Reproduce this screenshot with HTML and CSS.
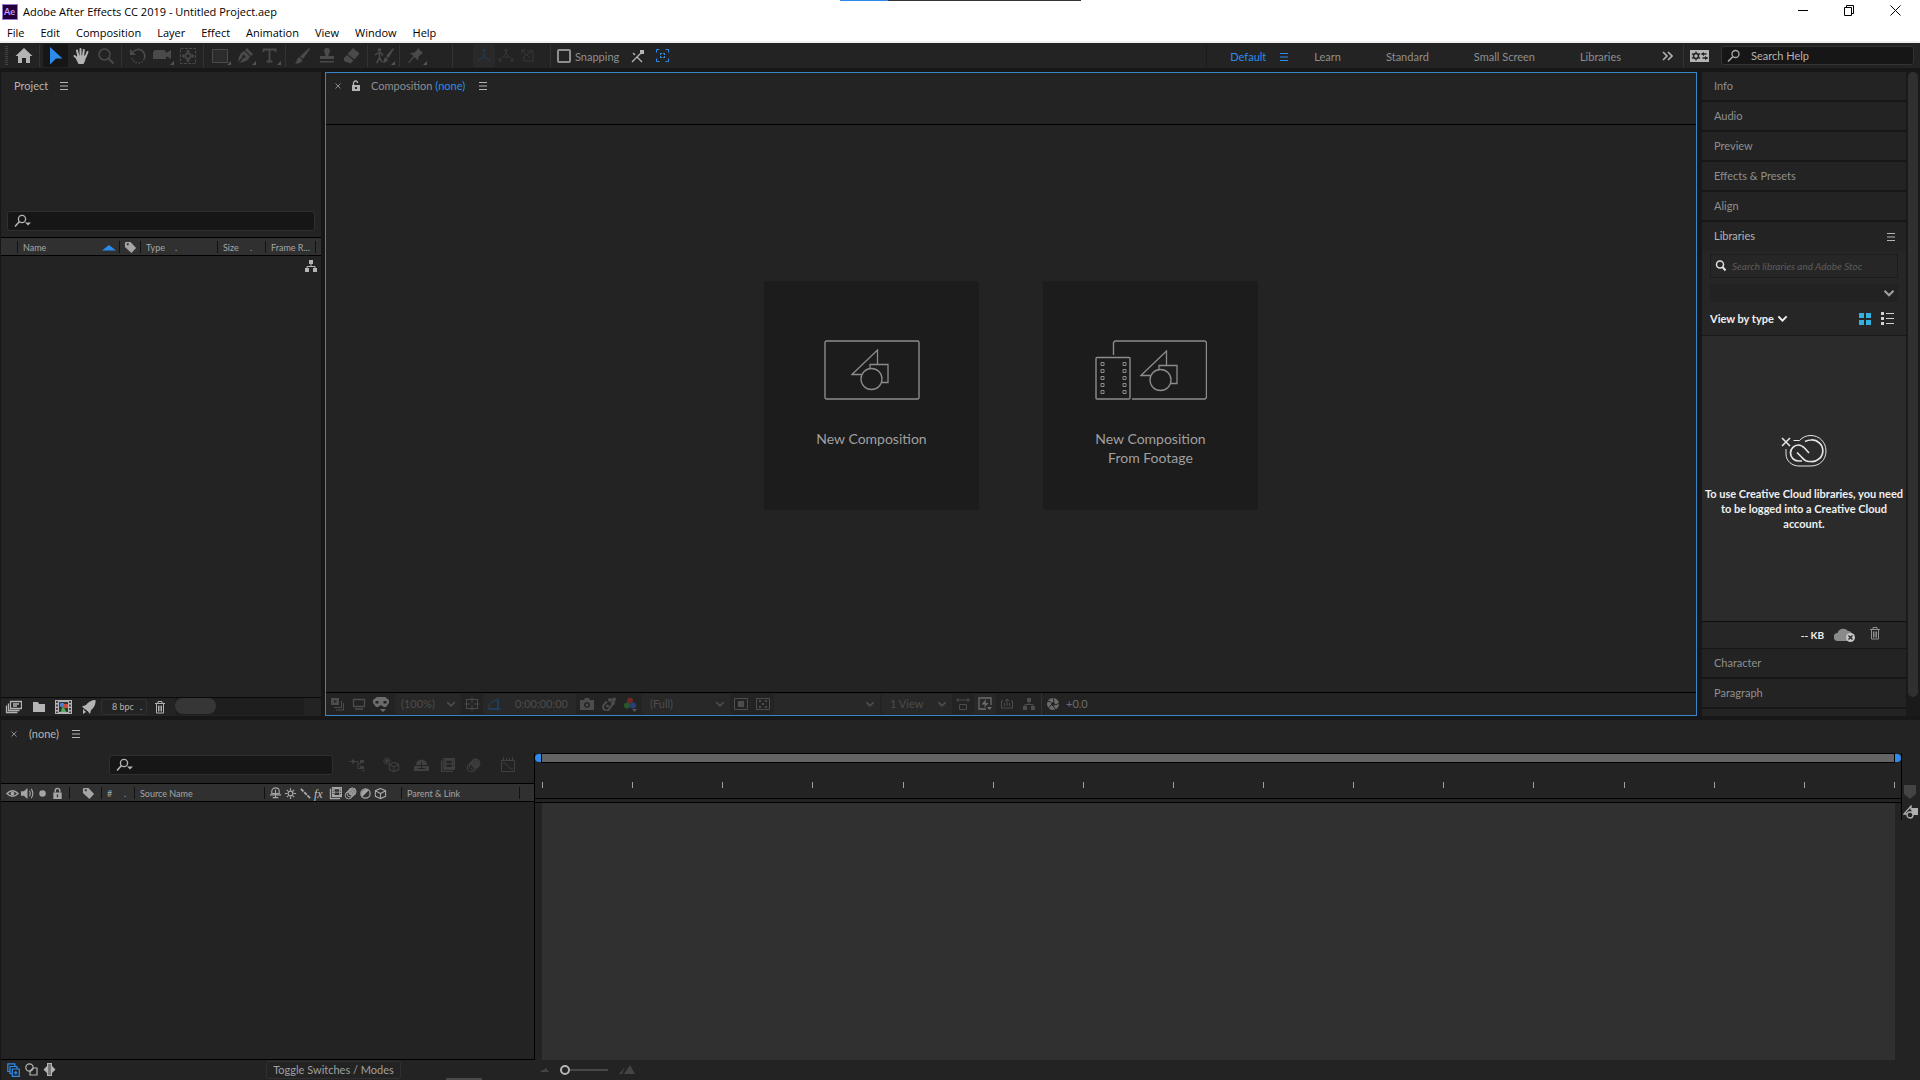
FILE: index.html
```html
<!DOCTYPE html>
<html lang="en">
<head>
  <meta charset="UTF-8">
  <meta name="viewport" content="width=device-width, initial-scale=1.0">
  <title>Adobe After Effects CC 2019 - Untitled Project.aep</title>
  <link rel="stylesheet" href="styles.css">
</head>
<body>
  <!-- shared icons -->
  <svg class="defs" width="0" height="0">
    <symbol id="menu" viewBox="0 0 10 10"><path d="M1 1.5h8M1 5h8M1 8.5h8" stroke="currentColor"/></symbol>
    <symbol id="chevron" viewBox="0 0 8 8"><path d="M1 2.5l3 3 3-3" fill="none" stroke="currentColor" stroke-width="1.4"/></symbol>
    <symbol id="find" viewBox="0 0 18 14"><circle cx="8" cy="5" r="3.6" fill="none" stroke="currentColor" stroke-width="1.3"/><path d="M5.500 7.500L1 12.500" stroke="currentColor" stroke-width="1.600"/><path d="M11 8.500h6l-3 3z" fill="currentColor"/></symbol>
    <symbol id="tag" viewBox="0 0 14 14"><path fill-rule="evenodd" fill="currentColor" d="M1 2l1-1h5l6 6.500-5 5.500L1 6.500zM3 2.500v2h2v-2z"/></symbol>
    <symbol id="tree" viewBox="0 0 14 14"><path fill="currentColor" d="M5 1h4v4H5zM1 9h4v4H1zM9 9h4v4H9z"/><path d="M7 5v2.500M3 9V7.500h8V9" fill="none" stroke="currentColor"/></symbol>
    <symbol id="shapes" viewBox="0 0 38 42"><g fill="none" stroke="currentColor" stroke-width="1.300"><path d="M10.500 25.500H1L26.500 1v14"/><path d="M19 19.500v-4h18v18h-6.500"/><circle cx="20.500" cy="30" r="10.500"/></g></symbol>
    <symbol id="film" viewBox="0 0 14 14"><path fill-rule="evenodd" fill="currentColor" d="M3 0h11v11H3zM6 2.500V5h5V2.500zM6 6v2.500h5V6zM4 1.500v1h1v-1zM4 4v1h1V4zM4 6.500v1h1v-1zM12 1.500v1h1v-1zM12 4v1h1V4zM12 6.500v1h1v-1z"/><path d="M1.500 2v10.500H12" fill="none" stroke="currentColor" stroke-width="1.300"/></symbol>
    <symbol id="blur" viewBox="0 0 14 14"><g stroke="currentColor" fill="none"><circle cx="5" cy="9" r="3.800"/><circle cx="7" cy="7" r="3.800"/></g><circle cx="9" cy="5" r="4" fill="currentColor" opacity=".7"/><circle cx="9" cy="5" r="4" fill="none" stroke="currentColor"/></symbol>
    <symbol id="cube" viewBox="0 0 14 14"><path d="M7 1.500l5.500 2.500v6L7 12.500 1.500 10V4zM1.500 4L7 7l5.500-3M7 7v5.500" fill="none" stroke="currentColor" stroke-width="1.200"/></symbol>
    <symbol id="shy" viewBox="0 0 14 14"><path d="M3 7V4.500a4 3.500 0 0 1 8 0V7zM7 3v9M1 8.500h12M4 11.500h6" fill="none" stroke="currentColor" stroke-width="1.200"/></symbol>
    <symbol id="trash" viewBox="0 0 14 14"><path d="M2 3.500h10M5 3V1.500h4V3M3.500 4v9h7V4M5.500 5.500v6M7 5.500v6M8.500 5.500v6" fill="none" stroke="currentColor"/></symbol>
  </svg>

  <header class="titlebar">
    <div class="title">
      <svg width="16" height="16" viewBox="0 0 16 16" font-family="Lato, sans-serif"><path d="M0 0h16v16H0z" fill="#9a7bd0"/><path d="M1 1h14v14H1z" fill="#22003c"/><text x="2" y="11" font-size="9" font-weight="bold" fill="#c79bff">Ae</text></svg>
      <h1>Adobe After Effects CC 2019 - Untitled Project.aep</h1>
    </div>
    <div class="drag-strip"></div>
    <div class="window-buttons">
      <button aria-label="Minimize"><svg width="11" height="11"><path d="M0 5.500h10" stroke="#000"/></svg></button>
      <button aria-label="Restore"><svg width="11" height="11"><path d="M.5 2.500h7v8h-7zM2.500 2.500v-2h7v8h-2" fill="none" stroke="#000"/></svg></button>
      <button aria-label="Close"><svg width="11" height="11"><path d="M.5.500l10 10M10.500.500l-10 10" stroke="#000"/></svg></button>
    </div>
  </header>

  <nav class="menubar">
    <button>File</button>
    <button>Edit</button>
    <button>Composition</button>
    <button>Layer</button>
    <button>Effect</button>
    <button>Animation</button>
    <button>View</button>
    <button>Window</button>
    <button>Help</button>
  </nav>

  <div class="toolbar">
    <span class="grip"></span>
    <button class="tool bright" aria-label="Home"><svg width="18" height="16" viewBox="0 0 18 16"><path fill="currentColor" d="M9 0l8.500 8H15v7h-4v-5H7v5H3V8H.5z"/></svg></button>
    <span class="sep"></span>
    <button class="tool selected" aria-label="Selection"><svg width="14" height="18" viewBox="0 0 14 18"><path fill="currentColor" d="M1 0l12.500 11.500H7L1 17.500z"/></svg></button>
    <button class="tool bright" aria-label="Hand"><svg width="16" height="16" viewBox="0 0 16 16"><path d="M5.500 9L4 2.500M7.500 8V1M10 8l.8-6M12.500 9l2-5M5 11L1.500 8" stroke="currentColor" stroke-width="2" stroke-linecap="round"/><path fill="currentColor" d="M4.500 7.500h9L12 13l-1.500 3h-5L3 11z"/></svg></button>
    <button class="tool" aria-label="Zoom"><svg width="16" height="16" viewBox="0 0 16 16"><circle cx="6.500" cy="6.500" r="5.500" fill="none" stroke="currentColor" stroke-width="1.500"/><path d="M10.500 10.500l5 5" stroke="currentColor" stroke-width="2"/></svg></button>
    <span class="sep"></span>
    <button class="tool" aria-label="Rotation"><svg width="18" height="16" viewBox="0 0 18 16"><path d="M4 4a6.500 6.500 0 0 1 10.500 8" fill="none" stroke="currentColor" stroke-width="1.600"/><path d="M13.500 13.500A6.500 6.500 0 0 1 3 10" fill="none" stroke="currentColor" stroke-width="1.600" stroke-dasharray="1.500 1.500"/><path fill="currentColor" d="M1 1v6h6z"/></svg></button>
    <button class="tool more" aria-label="Camera"><svg width="19" height="16" viewBox="0 0 19 16"><path fill="currentColor" d="M0 4l2-2h9l2 2v1l5-3v9l-5-3v3H0z"/></svg></button>
    <button class="tool" aria-label="Pan Behind"><svg width="16" height="16" viewBox="0 0 16 16"><path d="M.5.500h15v15H.5z" fill="none" stroke="currentColor" stroke-dasharray="3 1.300"/><circle cx="8" cy="8" r="2.500" fill="none" stroke="currentColor" stroke-width="1.300"/><path fill="currentColor" d="M8 1.500l2.500 3h-5zM8 14.500l2.500-3h-5zM1.500 8l3-2.500v5zM14.500 8l-3-2.500v5z"/></svg></button>
    <span class="sep"></span>
    <button class="tool more" aria-label="Rectangle"><svg width="16" height="14"><path d="M.5.500h15v13H.5z" fill="#2c2c2c" stroke="currentColor"/></svg></button>
    <button class="tool more" aria-label="Pen"><svg width="16" height="16" viewBox="0 0 16 16"><path fill="currentColor" d="M10 0l6 6-2 2-6-6zM7.500 3l5.500 5.500c-1.500 3.500-4 5-9 6l-2 1 4.500-5.500a1.500 1.500 0 1 0-1-1L1 14C1.500 9 3 4.500 7.500 3z"/></svg></button>
    <button class="tool more" aria-label="Type"><svg width="15" height="15" viewBox="0 0 15 15"><path d="M1.500 4V1.500h12V4M7.500 1.500v12M4.500 13.500h6" fill="none" stroke="currentColor" stroke-width="1.800"/></svg></button>
    <span class="sep"></span>
    <button class="tool" aria-label="Brush"><svg width="16" height="16" viewBox="0 0 16 16"><path fill="currentColor" d="M15 0l1 1-7 10-3-2.500zM5 9l3.500 3C7 15 4.500 16 1 15.500 3 14 2.500 10.500 5 9z"/></svg></button>
    <button class="tool" aria-label="Clone Stamp"><svg width="16" height="16" viewBox="0 0 16 16"><path fill="currentColor" d="M8 0a3 3 0 0 1 3 3c0 1-1.500 3-1.500 5H15v3H1V8h5.500C6.500 6 5 4 5 3a3 3 0 0 1 3-3zM1 13h14v1.500H1z"/></svg></button>
    <button class="tool" aria-label="Eraser"><svg width="17" height="16" viewBox="0 0 17 16"><path fill="currentColor" d="M10 0l6.500 5.500-5 6-7-5.500zM4 7l6.500 5.500-3 3L1 13V10z"/></svg></button>
    <span class="sep"></span>
    <button class="tool more" aria-label="Roto Brush"><svg width="20" height="16" viewBox="0 0 20 16"><circle cx="5.500" cy="2" r="1.800" fill="currentColor"/><path d="M1 7l3-2h3l2 2.500M5.500 5v5l-3 5M5.500 10l2.500 4" fill="none" stroke="currentColor" stroke-width="1.500"/><path fill="currentColor" d="M19 0l1 1-5.500 9L12 8zM11.500 9l2.500 2.500c-1 2.500-3 3.500-5.500 3 1.500-1 1.200-4 3-5.500z"/></svg></button>
    <span class="sep"></span>
    <button class="tool more" aria-label="Puppet Pin"><svg width="16" height="16" viewBox="0 0 16 16"><path fill="currentColor" d="M10 0l5 5-1.500 1-3 2.500-.5 4L6.500 9 1 15l-1-.5L5.500 8 2 5l4.500-.5L9 2z"/></svg></button>
    <span class="sep axis-sep"></span>
    <button class="tool axis on" aria-label="Local Axis Mode"><svg width="16" height="16" viewBox="0 0 16 16"><path d="M8 1v8l-6 4M8 9l6 4M6 3l2-2 2 2" fill="none" stroke="currentColor"/></svg></button>
    <button class="tool axis" aria-label="World Axis Mode"><svg width="16" height="16" viewBox="0 0 16 16"><path d="M8 1v4M4 9l-3 4M12 9l3 4M6 3l2-2 2 2M1 10v3h3M15 10v3h-3M5 9l3-4 3 4z" fill="none" stroke="currentColor"/></svg></button>
    <button class="tool axis" aria-label="View Axis Mode"><svg width="16" height="16" viewBox="0 0 16 16"><path d="M2 2l8 8M2 6V2h4M7 3h6v10H4V8l9-5" fill="none" stroke="currentColor"/></svg></button>
    <span class="sep"></span>
    <label class="snapping"><input type="checkbox"><span>Snapping</span></label>
    <button class="tool bright" aria-label="Snap to edges"><svg width="13" height="14" viewBox="0 0 13 14"><path d="M1 13l5-5 5 5M2 4l2 2M6 8l5-5" fill="none" stroke="currentColor" stroke-width="1.300"/><path fill="currentColor" d="M9 1h4v4h-4z"/></svg></button>
    <button class="tool blue" aria-label="Snap to features"><svg width="13" height="13" viewBox="0 0 13 13"><path d="M.5 3.500v-3h3M9.500.500h3v3M12.500 9.500v3h-3M3.500 12.500h-3v-3" fill="none" stroke="currentColor"/><path d="M4 4h2v1H5v1H4zM7 4h2v2H8V5H7zM4 7h1v1h1v1H4zM8 7h1v2H7V8h1z" fill="currentColor"/></svg></button>

    <div class="workspaces">
      <span class="sep"></span>
      <button class="current">Default</button>
      <button class="blue" aria-label="Workspace menu"><svg width="10" height="10"><use href="#menu"/></svg></button>
      <button>Learn</button>
      <button>Standard</button>
      <button>Small Screen</button>
      <button>Libraries</button>
    </div>
    <button class="tool bright" aria-label="More workspaces"><svg width="11" height="10" viewBox="0 0 11 10"><path d="M1 1l4 4-4 4M6 1l4 4-4 4" fill="none" stroke="currentColor" stroke-width="1.600"/></svg></button>
    <span class="sep"></span>
    <button class="tool bright" aria-label="Sync settings"><svg width="19" height="12" viewBox="0 0 19 12"><path fill="currentColor" d="M0 0h19v12H0z"/><circle cx="6" cy="6" r="2.500" fill="none" stroke="#232323" stroke-width="1.500"/><path d="M6 1.500v2M6 8.500v2M2 3.700l2 1M8 7.300l2 1M10 3.700l-2 1M4 7.300l-2 1M11.500 4h5M12.500 8h5" stroke="#232323" stroke-width="1.300"/><path fill="#232323" d="M14 2v4l-3-2zM15 6v4l3-2z"/></svg></button>
    <label class="help-search">
      <svg width="14" height="14" viewBox="0 0 14 14"><circle cx="8.500" cy="5" r="3.500" fill="none" stroke="#aaa" stroke-width="1.300"/><path d="M6 7.500l-5 5" stroke="#aaa" stroke-width="1.600"/></svg>
      <input type="text" placeholder="Search Help" aria-label="Search Help">
    </label>
  </div>

  <main class="workspace">
    <section class="project">
      <div class="panel-tab"><h2>Project</h2><button aria-label="Project menu"><svg width="10" height="10"><use href="#menu"/></svg></button></div>
      <label class="search"><svg width="18" height="14"><use href="#find"/></svg><input type="text" aria-label="Search project"></label>
      <table class="columns">
        <tr>
          <th class="c-blank"></th>
          <th class="c-name"><span>Name <svg width="14" height="6"><path d="M0 5.500L7 0l7 5.500z" fill="#2d8ceb"/></svg></span></th>
          <th class="c-tag"><svg width="13" height="13"><use href="#tag"/></svg></th>
          <th class="c-type"><span>Type <i>.</i></span></th>
          <th class="c-size"><span>Size <i>.</i></span></th>
          <th class="c-rate">Frame R...</th>
          <th></th>
        </tr>
      </table>
      <div class="project-list"><button aria-label="Flowchart"><svg width="14" height="14"><use href="#tree"/></svg></button></div>
      <div class="project-foot">
        <button aria-label="Interpret footage"><svg width="17" height="14" viewBox="0 0 17 14"><path d="M5.500 1.500h11v7h-11zM3.500 3.500v7h11M1.500 5.500v7h11M8 4h6M8 6h4" fill="none" stroke="currentColor" stroke-width="1.300"/></svg></button>
        <button aria-label="New folder"><svg width="14" height="12" viewBox="0 0 14 12"><path d="M1 1h5l1 2h6v8H1z" fill="currentColor"/></svg></button>
        <button aria-label="New composition"><svg width="17" height="14" viewBox="0 0 17 14"><path fill="currentColor" d="M0 0h17v14H0z"/><path d="M2 1v12M15 1v12" stroke="#232323" stroke-dasharray="2 1.500" stroke-width="1.500"/><path fill="#343434" d="M4 2h9v10H4z"/><circle cx="7" cy="5" r="2.300" fill="#4a7fd0"/><path fill="#d04a3c" d="M9 4h4v4H9z"/><path fill="#4fae5a" d="M8 6l3.500 6h-6z"/></svg></button>
        <button aria-label="Render settings"><svg width="14" height="14" viewBox="0 0 14 14"><path fill="currentColor" d="M13.500 0C14 4 12 8 9 10l-1 4-2.500-3L2 8.500 0 6.500 4 5c2-3 5.500-5 9.500-5zM1 9l3 3-3 2z"/></svg></button>
        <button class="bpc">8 bpc <i>.</i></button>
        <button aria-label="Delete"><svg width="14" height="14"><use href="#trash"/></svg></button>
        <div class="hscroll"><span></span></div>
      </div>
    </section>

    <section class="composition">
      <div class="panel-tab">
        <button aria-label="Close tab"><svg width="6" height="6"><path d="M.5.500l5 5M5.500.500l-5 5" stroke="#8a8a8a"/></svg></button>
        <button aria-label="Lock"><svg width="10" height="12" viewBox="0 0 10 12"><path fill-rule="evenodd" fill="currentColor" d="M1 5h8v6H1zM4 7v2h2V7z"/><path d="M2.500 5V3a2 2 0 0 1 4 0" fill="none" stroke="currentColor" stroke-width="1.300"/></svg></button>
        <h2>Composition <a href="#">(none)</a></h2>
        <button aria-label="Composition menu"><svg width="10" height="10"><use href="#menu"/></svg></button>
      </div>
      <div class="stage">
        <button class="card">
          <svg width="96" height="60" viewBox="0 0 96 60"><rect x="1" y="1" width="94" height="58" rx="1.500" fill="none" stroke="currentColor" stroke-width="1.400"/><use href="#shapes" x="27" y="9" width="38" height="42"/></svg>
          <span>New Composition</span>
        </button>
        <button class="card">
          <svg width="112" height="60" viewBox="0 0 112 60"><g fill="none" stroke="currentColor" stroke-width="1.400"><path d="M18.500 15V2.500L20 1h90l1.500 1.500v55L110 59H37"/><rect x="1" y="17.500" width="34" height="41.500" rx="1"/></g><g fill="none" stroke="currentColor"><path d="M6 22.500h3v3H6zM6 29.500h3v3H6zM6 36.500h3v3H6zM6 43.500h3v3H6zM6 50.500h3v3H6zM28 22.500h3v3h-3zM28 29.500h3v3h-3zM28 36.500h3v3h-3zM28 43.500h3v3h-3zM28 50.500h3v3h-3z"/></g><use href="#shapes" x="45" y="10" width="38" height="42"/></svg>
          <span>New Composition<br>From Footage</span>
        </button>
      </div>
      <div class="viewer-foot">
        <button aria-label="Preview"><svg width="14" height="14" viewBox="0 0 14 14"><path fill-rule="evenodd" fill="currentColor" d="M1 1h8v7H1zM4 3v3l3-1.500z"/><path d="M4 10.500h7.500V4M6 13h7.500V6" fill="none" stroke="currentColor"/></svg></button>
        <button aria-label="Monitor"><svg width="14" height="12" viewBox="0 0 14 12"><path d="M1.500 1.500h11v7h-11zM3 11h8" fill="none" stroke="currentColor" stroke-width="1.300"/></svg></button>
        <button aria-label="VR view"><svg width="16" height="15" viewBox="0 0 16 15"><path fill-rule="evenodd" fill="#6c6c6c" d="M4 0h8l4 3v3l-3 4h-2L8 8l-3 2H3L0 6V3zM2.500 4v2.500h3V4zM10.500 4v2.500h3V4zM7 12h6l-3 3z"/></svg></button>
        <label class="pick magnify"><select aria-label="Magnification"><option>(100%)</option></select><svg width="10" height="10"><use href="#chevron"/></svg></label>
        <button aria-label="Grid"><svg width="14" height="14" viewBox="0 0 14 14"><path d="M1.500 2.500h11v9h-11zM7 0v6M7 8v6M0 7h5M9 7h5" fill="none" stroke="currentColor"/></svg></button>
        <button class="on" aria-label="Mask paths"><svg width="14" height="14" viewBox="0 0 14 14"><path d="M2 12V9q1-5 8-6M2 12h9V3M0 12h14M11 1v13" fill="none" stroke="#1d4568"/></svg></button>
        <span class="time">0:00:00:00</span>
        <button aria-label="Snapshot"><svg width="14" height="12" viewBox="0 0 14 12"><path fill-rule="evenodd" fill="currentColor" d="M0 2h4l1-2h4l1 2h4v10H0zM7 4a3 3 0 1 0 .01 0z"/><circle cx="7" cy="7" r="1.500" fill="currentColor"/></svg></button>
        <button aria-label="Show snapshot"><svg width="14" height="14" viewBox="0 0 14 14"><path d="M5 4.500l-3 3a3.500 3.500 0 1 0 6 3L11 7" fill="none" stroke="currentColor" stroke-width="2"/><circle cx="5.500" cy="9" r="1.500" fill="currentColor"/><circle cx="8" cy="3" r="2" fill="currentColor"/><circle cx="12" cy="2.500" r="2" fill="currentColor"/><circle cx="11" cy="6" r="2" fill="currentColor"/></svg></button>
        <button aria-label="Channels"><svg width="14" height="15" viewBox="0 0 14 15"><circle cx="6" cy="3.500" r="3" fill="#6e2626"/><circle cx="3" cy="8.500" r="3" fill="#265a2a"/><circle cx="9" cy="8.500" r="3" fill="#2a3e78"/><path fill="#555" d="M8 12h5l-2.500 3z"/></svg></button>
        <label class="pick resolution"><select aria-label="Resolution"><option>(Full)</option></select><svg width="10" height="10"><use href="#chevron"/></svg></label>
        <button aria-label="Region of interest"><svg width="14" height="12"><path d="M.5.500h13v11H.5z" fill="none" stroke="currentColor"/><path d="M4 3h6v6H4z" fill="currentColor"/></svg></button>
        <button aria-label="Transparency grid"><svg width="14" height="12"><path d="M.5.500h13v11H.5z" fill="none" stroke="currentColor"/><path fill="currentColor" d="M3 2h2v2H3zM9 2h2v2H9zM6 5h2v2H6zM3 8h2v2H3zM9 8h2v2H9z"/></svg></button>
        <label class="pick view3d"><select aria-label="3D view"><option></option></select><svg width="10" height="10"><use href="#chevron"/></svg></label>
        <label class="pick views"><select aria-label="View layout"><option>1 View</option></select><svg width="10" height="10"><use href="#chevron"/></svg></label>
        <button aria-label="Pixel aspect ratio"><svg width="14" height="12" viewBox="0 0 14 12"><path d="M0 2h14M2 0v4M12 0v4M3.500 6.500h7v5h-7z" fill="none" stroke="currentColor"/></svg></button>
        <button class="lit" aria-label="Fast previews"><svg width="14" height="14" viewBox="0 0 14 14"><path d="M13 8V1H1v11h7" fill="none" stroke="currentColor" stroke-width="1.300"/><path fill="currentColor" d="M8 2L3.500 7.500H7L6 11l4.500-5H7.500zM9 10h5l-2.500 3z"/></svg></button>
        <button aria-label="Timeline"><svg width="14" height="12" viewBox="0 0 14 12"><path d="M3 3H1.500v7h11V3H11M4.500 8V5M7 8V1M9.500 8V5M5 3l2-2 2 2" fill="none" stroke="currentColor"/></svg></button>
        <button aria-label="Composition flowchart"><svg width="14" height="14"><use href="#tree"/></svg></button>
        <span class="sep"></span>
        <button class="exposure-reset" aria-label="Reset exposure"><svg width="14" height="14" viewBox="0 0 14 14"><circle cx="7" cy="7" r="4" fill="none" stroke="currentColor" stroke-width="4"/><path d="M7 0l1 5M14 6L9 8M10 13L7 9M2 12l3-4M0 4l5 1" stroke="#232323"/></svg></button>
        <span class="exposure">+0.0</span>
      </div>
    </section>

    <aside class="side">
      <div class="stack">
        <h2>Info</h2>
        <h2>Audio</h2>
        <h2>Preview</h2>
        <h2>Effects &amp; Presets</h2>
        <h2>Align</h2>
        <section class="libraries">
          <div class="lib-head"><h2>Libraries</h2><button aria-label="Libraries menu"><svg width="10" height="10"><use href="#menu"/></svg></button></div>
          <label class="lib-search"><svg width="12" height="12" viewBox="0 0 12 12"><circle cx="5" cy="4.500" r="3.500" fill="none" stroke="#e0e0e0" stroke-width="1.500"/><path d="M7.500 7l3 3.500" stroke="#e0e0e0" stroke-width="2"/></svg><input type="text" placeholder="Search libraries and Adobe Stoc" aria-label="Search libraries"></label>
          <label class="pick lib-pick"><select aria-label="Library"><option></option></select><svg width="12" height="12"><use href="#chevron"/></svg></label>
          <div class="view-row">
            <button class="view-by">View by type <svg width="11" height="11"><use href="#chevron"/></svg></button>
            <button class="cyan" aria-label="Grid view"><svg width="12" height="12"><path fill="currentColor" d="M0 0h5v5H0zM7 0h5v5H7zM0 7h5v5H0zM7 7h5v5H7z"/></svg></button>
            <button aria-label="List view"><svg width="13" height="13"><path fill="currentColor" d="M0 0h3v3H0zM0 5h3v3H0zM0 10h3v3H0zM5 1h8v1H5zM5 6h8v1H5zM5 11h8v1H5z"/></svg></button>
          </div>
          <div class="lib-body">
            <svg width="46" height="34" viewBox="0 0 46 34"><g fill="none" stroke="#e4e4e4"><path d="M1 4l8 8M9 4l-8 8" stroke-width="1.600"/><path d="M12.500 6.500h6C22 3 25 1.500 30 1.500c8 0 15 6.500 15 15.500s-6.500 15-15 15H18C11 32 5 27 5 20v-5"/><path stroke-width="1.700" d="M28 19l-4-4.500C21.500 12 20 11 17.500 11a7.800 7.800 0 0 0 0 16H21M24 7.500C26 6.500 28 6 30 6a10.800 10.800 0 1 1 0 21.500h-2c-3 0-5-1.500-7-4l-5-5"/></g></svg>
            <p>To use Creative Cloud libraries, you need to be logged into a Creative Cloud account.</p>
          </div>
          <div class="lib-foot">
            <b>-- KB</b>
            <svg width="22" height="16" viewBox="0 0 22 16"><path fill="#8a8a8a" d="M4 14a4 4 0 0 1-.5-8A6 6 0 0 1 14 4c3 0 4 2 4 4v6z"/><circle cx="16.500" cy="10.500" r="4.500" fill="#c8c8c8"/><path d="M14.500 8.500l4 4M18.500 8.500l-4 4" stroke="#232323" stroke-width="1.300"/></svg>
            <button aria-label="Delete"><svg width="14" height="14"><use href="#trash"/></svg></button>
          </div>
        </section>
        <h2>Character</h2>
        <h2>Paragraph</h2>
        <div class="rest"></div>
      </div>
      <div class="vscroll"><span></span></div>
    </aside>
  </main>

  <section class="timeline">
    <div class="layers">
      <div class="panel-tab">
        <button aria-label="Close tab"><svg width="6" height="6"><path d="M.5.500l5 5M5.500.500l-5 5" stroke="#8a8a8a"/></svg></button>
        <h2>(none)</h2>
        <button aria-label="Timeline menu"><svg width="10" height="10"><use href="#menu"/></svg></button>
      </div>
      <div class="layer-tools">
        <label class="search"><svg width="18" height="14"><use href="#find"/></svg><input type="text" aria-label="Search layers"></label>
        <button class="wide" aria-label="Mini flowchart"><svg width="17" height="14" viewBox="0 0 17 14"><path d="M0 3.500h9M9 3.500v7h3M9 6h3" fill="none" stroke="currentColor"/><path fill="currentColor" d="M3 1l4 2.500L3 6zM11 2h4v3h-4zM11 8h4v3h-4zM13 12h3l-1.500 2z"/></svg></button>
        <button class="wide" aria-label="Draft 3D"><svg width="17" height="16" viewBox="0 0 17 16"><path d="M4 0v8M0 4h8M1 1l6 6M7 1L1 7" stroke="currentColor"/><use href="#cube" x="5" y="4" width="12" height="12"/></svg></button>
        <button aria-label="Hide shy layers"><svg width="15" height="14" viewBox="0 0 15 14"><path fill="currentColor" d="M2 7a5.500 5.500 0 0 1 11 0zM0 8h15v5H0z"/><path d="M7.500 4v7M4 10.500h7" stroke="#232323"/></svg></button>
        <button aria-label="Frame blending"><svg width="15" height="15"><use href="#film"/></svg></button>
        <button aria-label="Motion blur"><svg width="15" height="15"><use href="#blur"/></svg></button>
        <button class="graph" aria-label="Graph editor"><svg width="16" height="16" viewBox="0 0 16 16"><path d="M1.500 3.500h13v11h-13zM3 6c5 0 5 6 10 6M3.500 0v3M6.500 1v2M9.500 1v2M12.500 0v3" fill="none" stroke="currentColor"/></svg></button>
      </div>
      <table class="columns">
        <tr>
          <th class="c-av"><span>
            <svg width="13" height="13" viewBox="0 0 14 14"><path d="M1 7q6-6 12 0q-6 6-12 0z" fill="none" stroke="currentColor" stroke-width="1.500"/><circle cx="7" cy="7" r="2" fill="currentColor"/></svg>
            <svg width="13" height="13" viewBox="0 0 14 14"><path fill="currentColor" d="M0 4.500h3L7 1v12L3 9.500H0z"/><path d="M9 4q2 3 0 6M11 2q3.500 5 0 10" fill="none" stroke="currentColor" stroke-width="1.200"/></svg>
            <svg width="13" height="13" viewBox="0 0 14 14"><circle cx="7" cy="7" r="3.500" fill="currentColor"/></svg>
            <svg width="13" height="13" viewBox="0 0 14 14"><path fill-rule="evenodd" fill="currentColor" d="M2.500 6h9v7h-9zM6.300 8v3h1.400V8z"/><path d="M4.500 6V4a2.500 2.500 0 0 1 5 0v2" fill="none" stroke="currentColor" stroke-width="1.500"/></svg>
          </span></th>
          <th class="c-label"><svg width="13" height="13"><use href="#tag"/></svg></th>
          <th class="c-num"><span># <i>.</i></span></th>
          <th class="c-source">Source Name</th>
          <th class="c-switch"><span>
            <svg width="13" height="13"><use href="#shy"/></svg>
            <svg width="13" height="13" viewBox="0 0 14 14"><circle cx="7" cy="7" r="2.500" fill="none" stroke="currentColor" stroke-width="1.200"/><path d="M7 1v3M7 10v3M1 7h3M10 7h3M3 3l2 2M9 9l2 2M11 3L9 5M5 9l-2 2" stroke="currentColor" stroke-width="1.200"/></svg>
            <svg width="13" height="13" viewBox="0 0 14 14"><path d="M2 2l10 10" stroke="currentColor" stroke-width="2" stroke-dasharray="4 1"/></svg>
            <em>fx</em>
            <svg width="13" height="13"><use href="#film"/></svg>
            <svg width="13" height="13"><use href="#blur"/></svg>
            <svg width="13" height="13" viewBox="0 0 14 14"><circle cx="7" cy="7" r="5" fill="none" stroke="currentColor" stroke-width="1.300"/><path fill="currentColor" d="M10.500 3.500A5 5 0 0 0 3.500 10.500z"/></svg>
            <svg width="13" height="13"><use href="#cube"/></svg>
          </span></th>
          <th class="c-parent">Parent &amp; Link</th>
          <th></th>
        </tr>
      </table>
    </div>

    <div class="track">
      <div class="work-area"><span class="handle"></span><span class="bar"></span><span class="handle end"></span></div>
      <div class="ticks">
        <i></i><i></i><i></i><i></i><i></i><i></i><i></i><i></i><i></i><i></i><i></i><i></i><i></i><i></i><i></i><i></i>
      </div>
      <div class="track-body"></div>
    </div>

    <div class="markers">
      <svg width="12" height="14" viewBox="0 0 12 14"><path fill="#444" d="M0 0h12v9l-6 5-6-5z"/></svg>
      <svg width="15" height="15" viewBox="0 0 15 15"><path fill="#b0b0b0" d="M8 3h7v7H9z"/><path d="M5 9H1l7-8v4" fill="none" stroke="#b0b0b0" stroke-width="1.300"/><circle cx="7" cy="10" r="3" fill="#232323" stroke="#b0b0b0" stroke-width="1.300"/></svg>
    </div>

    <footer class="timeline-foot">
      <button class="on" aria-label="Layer switches"><svg width="13" height="14" viewBox="0 0 13 14"><path d="M3 8.500H.8V.8h7V3M5.500 10.500H3v-7h7V6M5.300 6h7v7.300h-7zM8.800 8v3.500M7 9.800h3.500" fill="none" stroke="currentColor" stroke-width="1.200"/></svg></button>
      <button aria-label="Transfer controls"><svg width="13" height="13" viewBox="0 0 13 13"><circle cx="4.500" cy="4.500" r="3.700" fill="none" stroke="currentColor" stroke-width="1.200"/><path d="M8 5h4v7H5V8z" fill="none" stroke="currentColor" stroke-width="1.200"/></svg></button>
      <button aria-label="In and out"><svg width="13" height="13" viewBox="0 0 13 13"><path fill="currentColor" d="M4 0h5v3l3.500 3.500L9 10v3H4v-3L.5 6.500 4 3z"/><path fill="#777" d="M5 1h3v11H5z"/></svg></button>
      <button class="toggle">Toggle Switches / Modes</button>
      <label class="zoom">
        <svg width="9" height="4"><path d="M0 4l2-2h2l2-2 3 4z" fill="#444"/></svg>
        <input type="range" min="0" max="100" value="0" aria-label="Timeline zoom">
        <svg width="16" height="9"><path d="M0 9l6-7-3 7zM5 9l6-9 5 9z" fill="#444"/></svg>
      </label>
      <span class="resize"></span>
    </footer>
  </section>
</body>
</html>
```
FILE: styles.css
```css
* {
  box-sizing: border-box;
}
body {
  margin: 0;
  height: 100vh;
  display: flex;
  flex-direction: column;
  background: #171717;
  color: #8f8f8f;
  font: 11px/16px Lato, sans-serif;
  overflow: hidden;
}
h1, h2, p {
  margin: 0;
  font-size: 11px;
  font-weight: normal;
}
button {
  padding: 0;
  border: none;
  background: none;
  color: inherit;
  font: inherit;
  display: flex;
  align-items: center;
  justify-content: center;
}
input, select {
  border: none;
  outline: none;
  background: none;
  color: inherit;
  font: inherit;
  padding: 0;
  min-width: 0;
}
svg {
  display: block;
  flex: none;
}
a {
  color: #2d8ceb;
  text-decoration: none;
}
i {
  font-style: normal;
}
.defs {
  position: absolute;
}

/* title and menu */
.titlebar {
  background: #fff;
  height: 23px;
  display: flex;
  justify-content: space-between;
  position: relative;
  color: #000;
}
.title {
  display: flex;
  align-items: center;
  gap: 5px;
  padding-left: 2px;
}
.title h1 {
  font-family: "Open Sans", sans-serif;
}
.drag-strip {
  position: absolute;
  top: 0;
  left: 840px;
  width: 241px;
  height: 1px;
  background: linear-gradient(90deg, #2d8ceb 48px, #333 48px);
}
.window-buttons {
  display: flex;
  padding-right: 2px;
}
.window-buttons button {
  width: 46px;
  height: 20px;
}
.menubar {
  background: #fff;
  border-bottom: 2px solid #eef2ee;
  height: 20px;
  padding-top: 1px;
  display: flex;
  font-family: "Open Sans", sans-serif;
  color: #000;
}
.menubar button {
  padding: 0 8px;
}
.menubar button:first-child {
  padding-left: 7px;
}

/* toolbar */
.toolbar {
  background: #232323;
  height: 25px;
  display: flex;
  align-items: center;
  padding-right: 6px;
}
.grip {
  width: 3px;
  height: 19px;
  margin: 0 3px 0 5px;
  background: repeating-linear-gradient(#444 0 1px, #232323 1px 2px);
}
.tool {
  width: 25px;
  height: 23px;
  color: #4a4a4a;
  position: relative;
}
.bright {
  color: #b4b4b4;
}
.blue, .current {
  color: #2d8ceb;
}
.selected {
  background: #161616;
  border-radius: 2px;
  color: #2d8ceb;
}
.more::after {
  content: "";
  position: absolute;
  right: 1px;
  bottom: 2px;
  border: 2px solid transparent;
  border-right-color: #555;
  border-bottom-color: #555;
}
.sep {
  width: 1px;
  height: 22px;
  margin: 0 3px;
  background: #333;
}
.axis-sep {
  margin: 0 20px 0 24px;
}
.axis {
  width: 22px;
  color: #383838;
}
.axis.on {
  background: #292929;
  color: #1d3f5c;
}
.axis + .sep {
  margin-left: 11px;
}
.snapping {
  display: flex;
  align-items: center;
  gap: 4px;
  margin-right: 6px;
}
.snapping input {
  appearance: none;
  width: 14px;
  height: 14px;
  margin: 0 0 0 3px;
  border: 2px solid #8f8f8f;
  border-radius: 2px;
}
.snapping span {
  padding-top: 2px;
}
.workspaces {
  display: flex;
  align-items: center;
  gap: 45px;
  margin: 0 34px 0 auto;
}
.workspaces button {
  padding-top: 2px;
}
.workspaces .sep {
  margin: 0 -22px 0 0;
  background: #1a1a1a;
}
.workspaces .current {
  margin-right: -32px;
}
.workspaces .blue {
  margin-right: -20px;
}
.help-search {
  display: flex;
  align-items: center;
  gap: 10px;
  width: 193px;
  height: 19px;
  margin-left: 9px;
  padding-left: 5px;
  background: #161616;
  border: 1px solid #333;
  border-radius: 3px;
}
.help-search input {
  width: 140px;
  padding-top: 1px;
}
.help-search input::placeholder {
  color: #b4b4b4;
}

/* workspace */
.workspace {
  flex: 644 1 0;
  min-height: 0;
  display: flex;
  gap: 4px;
  padding: 4px 0 0 1px;
  box-sizing: content-box;
}
.project {
  width: 320px;
  display: flex;
  flex-direction: column;
  background: #232323;
}
.panel-tab {
  height: 28px;
  display: flex;
  align-items: center;
  gap: 11px;
  padding-left: 13px;
  color: #b4b4b4;
}
.search {
  display: flex;
  align-items: center;
  height: 20px;
  padding-left: 6px;
  background: #161616;
  border: 1px solid #303030;
  border-radius: 3px;
  color: #b4b4b4;
}
.project .search {
  margin: 111px 6px 6px;
}
.columns {
  width: 100%;
  table-layout: fixed;
  border-collapse: collapse;
  background: #303030;
  border-top: 1px solid #000;
  border-bottom: 1px solid #000;
  font-size: 9px;
  line-height: 12px;
  color: #a6a6a6;
}
.columns th {
  height: 18px;
  padding: 2px 0 0 5px;
  font-weight: normal;
  text-align: left;
  white-space: nowrap;
  overflow: hidden;
  background: linear-gradient(#111, #111) right / 1px 12px no-repeat;
}
.columns th:last-child {
  background: none;
}
.columns span {
  display: flex;
  align-items: center;
  justify-content: space-between;
}
.columns i {
  padding-right: 14px;
}
.c-blank {
  width: 17px;
}
.c-name {
  width: 102px;
}
.c-name span {
  padding-right: 4px;
}
.c-tag {
  width: 21px;
}
th.c-tag {
  padding-left: 4px;
}
.c-type {
  width: 77px;
}
.columns .c-type i {
  padding-right: 41px;
}
.c-size {
  width: 48px;
}
.c-rate {
  width: 50px;
}
.project-list {
  flex: 1;
  padding: 3px 3px 0 0;
}
.project-list button {
  margin-left: auto;
  color: #b4b4b4;
}
.project-foot {
  display: flex;
  align-items: center;
  height: 18px;
  margin-bottom: 1px;
  border-top: 1px solid #0a0a0a;
  color: #b4b4b4;
  font-size: 9px;
}
.project-foot button {
  width: 25px;
}
.project-foot .bpc {
  width: 46px;
  height: 16px;
  padding-left: 6px;
  gap: 6px;
  border: 1px solid #303030;
  border-radius: 2px;
}
.hscroll {
  width: 129px;
  height: 17px;
  margin-left: 3px;
  background: #1e1e1e;
}
.hscroll span {
  display: block;
  width: 41px;
  height: 16px;
  border-radius: 8px;
  background: #363636;
}

/* composition panel */
.composition {
  flex: 1;
  min-width: 0;
  display: flex;
  flex-direction: column;
  background: #232323;
  border: 1px solid #3a84cc;
}
.composition .panel-tab {
  height: 26px;
  padding-left: 9px;
  gap: 10px;
}
.composition h2 {
  padding-right: 3px;
  color: #8f8f8f;
}
.stage {
  flex: 1;
  margin-top: 25px;
  padding-bottom: 26px;
  border-top: 1px solid #000;
  border-bottom: 1px solid #000;
  display: flex;
  align-items: center;
  justify-content: center;
  gap: 64px;
}
.card {
  width: 215px;
  height: 229px;
  padding-top: 59px;
  flex-direction: column;
  justify-content: flex-start;
  gap: 29px;
  background: #1c1c1c;
  border-radius: 2px;
  color: #8c8c8c;
  font-size: 14px;
  line-height: 19px;
}
.card span {
  min-height: 38px;
  color: #a0a0a0;
}
.viewer-foot {
  height: 22px;
  display: flex;
  align-items: center;
  color: #4c4c4c;
}
.viewer-foot button {
  width: 22px;
  height: 20px;
}
.viewer-foot .on, .viewer-foot .lit {
  background: #282828;
}
.viewer-foot .lit, .viewer-foot .exposure-reset {
  color: #6c6c6c;
}
.pick {
  position: relative;
  display: flex;
  height: 20px;
  background: #282828;
}
.pick select {
  appearance: none;
  width: 100%;
  padding-left: 8px;
}
.pick svg {
  position: absolute;
  right: 5px;
  top: 5px;
  pointer-events: none;
}
.magnify {
  width: 66px;
  margin: 0 0 0 3px;
}
.magnify select {
  padding-left: 6px;
}
.resolution {
  width: 88px;
}
.view3d {
  width: 106px;
}
.views {
  width: 70px;
  margin-left: 2px;
}
.time {
  width: 71px;
  padding: 2px 0 2px 10px;
  background: #282828;
}
.viewer-foot .sep {
  margin: 0 0 0 1px;
}
.exposure {
  padding-left: 2px;
  color: #6c6c6c;
}

/* right side */
.side {
  width: 218px;
  margin-left: 1px;
  display: flex;
  background: #1c1c1c;
}
.stack {
  width: 204px;
  display: flex;
  flex-direction: column;
}
.stack > h2 {
  height: 30px;
  padding: 6px 0 0 12px;
  background: #232323;
  border-bottom: 2px solid #171717;
}
.vscroll {
  width: 14px;
  padding: 0 2px;
  background: #1a1a1a;
}
.vscroll span {
  display: block;
  height: 97%;
  border-radius: 5px;
  background: #303030;
}
.libraries {
  flex: 1;
  min-height: 0;
  display: flex;
  flex-direction: column;
  background: #262626;
  border-bottom: 1px solid #171717;
}
.lib-head {
  display: flex;
  justify-content: space-between;
  height: 29px;
  padding: 6px 10px 0 12px;
  background: #232323;
  color: #b4b4b4;
}
.lib-head button {
  height: 18px;
}
.lib-search {
  display: flex;
  align-items: center;
  gap: 5px;
  height: 24px;
  margin: 3px 8px 6px;
  padding-left: 4px;
  border: 1px solid #1c1c1c;
}
.lib-search input {
  flex: 1;
  font-size: 10px;
  font-style: italic;
}
.lib-search input::placeholder {
  color: #5c5c5c;
}
.lib-pick {
  height: 18px;
  margin: 0 8px;
  background: #222;
  color: #a0a0a0;
}
.pick.lib-pick svg {
  right: 3px;
  top: 3px;
}
.view-row {
  display: flex;
  align-items: center;
  gap: 10px;
  height: 34px;
  padding: 0 12px 0 8px;
  color: #d0d0d0;
  border-bottom: 1px solid #1a1a1a;
}
.view-by {
  margin-right: auto;
  gap: 3px;
  font-weight: bold;
  color: #f0f0f0;
}
.cyan {
  color: #33b1e0;
}
.lib-body {
  flex: 1;
  display: flex;
  flex-direction: column;
  align-items: center;
  justify-content: center;
  gap: 18px;
  padding-top: 8px;
  background: #2b2b2b;
  border-bottom: 1px solid #0c0c0c;
}
.lib-body p {
  width: 204px;
  line-height: 15px;
  font-weight: bold;
  text-align: center;
  color: #f0f0f0;
}
.lib-foot {
  display: flex;
  align-items: center;
  justify-content: flex-end;
  gap: 10px;
  height: 26px;
  padding-right: 24px;
}
.lib-foot b {
  font-size: 10px;
  color: #f0f0f0;
}
.lib-foot button {
  margin-left: 2px;
  padding-bottom: 4px;
}
.rest {
  height: 7px;
  background: #232323;
}

/* timeline */
.timeline {
  flex: 360 1 0;
  min-height: 0;
  margin: 4px 0 0 1px;
  display: grid;
  grid-template-columns: 533px 1fr 19px;
  grid-template-rows: 1fr 20px;
  background: #232323;
}
.layers {
  border-bottom: 1px solid #000;
}
.timeline .panel-tab {
  padding-left: 10px;
  gap: 12px;
}
.layer-tools {
  display: flex;
  align-items: center;
  height: 35px;
  padding: 0 0 1px 108px;
  color: #404040;
}
.layer-tools .search {
  width: 224px;
  margin-right: 7px;
}
.layer-tools button {
  width: 26px;
}
.layer-tools .wide {
  width: 34px;
}
.layer-tools .graph {
  margin-left: 9px;
}
.c-av {
  width: 69px;
}
.c-av span, .c-switch span {
  justify-content: flex-start;
  gap: 2px;
}
.c-label {
  width: 32px;
}
th.c-label {
  padding-left: 12px;
}
.c-num {
  width: 33px;
}
.columns .c-num i {
  padding-right: 9px;
}
.c-source {
  width: 130px;
}
.c-switch {
  width: 137px;
}
.columns th.c-switch {
  padding-left: 4px;
}
.c-switch em {
  width: 13px;
  font: italic 12px/12px "Liberation Serif", serif;
  color: #c0c0c0;
}
.c-parent {
  width: 118px;
}
.track {
  display: flex;
  flex-direction: column;
  margin-top: 33px;
  border-left: 1px solid #000;
}
.work-area {
  display: flex;
  height: 10px;
}
.work-area .bar {
  flex: 1;
  background: #646464;
  border: 1px solid #000;
}
.handle {
  width: 6px;
  margin: 1px 0;
  border-radius: 6px 0 0 6px;
  background: #2d8ceb;
}
.handle.end {
  border-radius: 0 6px 6px 0;
}
.ticks {
  display: flex;
  justify-content: space-between;
  height: 36px;
  padding: 19px 6px 0 7px;
  border-bottom: 1px solid #000;
}
.ticks i {
  width: 1px;
  height: 6px;
  background: #a0a0a0;
}
.track-body {
  flex: 1;
  margin-top: 3px;
  border-top: 1px solid #000;
  background: linear-gradient(#303030, #303030) content-box;
  padding: 0 6px 0 7px;
}
.markers {
  align-self: start;
  display: flex;
  flex-direction: column;
  align-items: center;
  gap: 6px;
  margin-top: 33px;
  padding: 32px 2px 0 0;
  border-left: 1px solid #000;
}
.timeline-foot {
  grid-column: 1 / -1;
  display: flex;
  align-items: center;
  padding-bottom: 1px;
  color: #b4b4b4;
  position: relative;
}
.timeline-foot button {
  width: 18px;
}
.timeline-foot button:first-child {
  margin-left: 3px;
}
.timeline-foot .on {
  color: #2d8ceb;
}
.timeline-foot .toggle {
  width: 135px;
  height: 18px;
  margin-left: 208px;
  border: 1px solid #303030;
  border-radius: 2px;
  color: #a0a0a0;
}
.zoom {
  display: flex;
  align-items: center;
  gap: 11px;
  margin-left: 139px;
}
.zoom input {
  appearance: none;
  width: 48px;
  height: 12px;
  margin: 0;
  background: linear-gradient(#484848, #484848) center / 100% 2px no-repeat;
}
.zoom input::-webkit-slider-thumb {
  appearance: none;
  width: 10px;
  height: 10px;
  border: 2px solid #b4b4b4;
  border-radius: 50%;
  background: #232323;
}
.resize {
  position: absolute;
  left: 445px;
  bottom: 0;
  width: 36px;
  height: 2px;
  background: #4a4a4a;
}
```
